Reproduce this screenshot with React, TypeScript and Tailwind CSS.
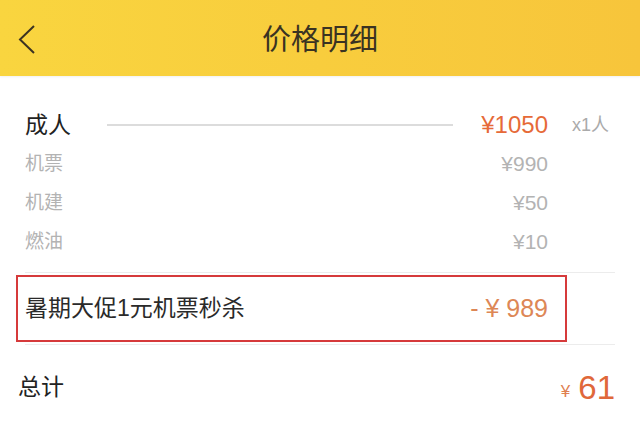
import React from 'react'

const font = { fontFamily: '"Liberation Sans", "Noto Sans CJK SC", sans-serif' }

const fees = [
  { label: '机票', price: '¥990' },
  { label: '机建', price: '¥50' },
  { label: '燃油', price: '¥10' }
]

const App = () => {
  return (
    <div
      className="flex h-[429px] w-[640px] flex-col overflow-hidden bg-white"
      style={font}
    >
      {/* header */}
      <div className="relative flex h-[76px] items-center justify-center bg-gradient-to-r from-[#f9d53f] to-[#f7c53b] shadow-[0_1px_2px_rgba(0,0,0,0.06)]">
        <svg
          className="absolute left-[17px] top-[24px]"
          width="20"
          height="31"
          viewBox="0 0 20 31"
          fill="none"
        >
          <path d="M17 2 L3 15.5 L17 29" stroke="#3b3322" strokeWidth="2" />
        </svg>
        <span className="pt-[5px] text-[29px] text-[#3a3322]">价格明细</span>
      </div>

      <div className="flex flex-col pt-[34px]">
        {/* adult */}
        <div className="flex h-[30px] items-center pl-[25px] pr-[25px]">
          <span className="text-[23px] text-[#222]">成人</span>
          <div className="ml-[36px] mr-[28px] h-[2px] flex-1 bg-[#dcdcdc]" />
          <span className="text-[24px] text-[#e66a38]">¥1050</span>
          <span className="w-[67px] pl-[24px] text-[18px] text-[#aaa]">x1人</span>
        </div>

        {fees.map((f) => (
          <div key={f.label} className="mt-[9px] flex h-[30px] items-center pl-[25px]">
            <span className="text-[19px] text-[#b3b3b3]">{f.label}</span>
            <div className="flex-1" />
            <span className="text-[21px] text-[#b3b3b3]">{f.price}</span>
            <span className="w-[92px]" />
          </div>
        ))}

        <div className="ml-[25px] mr-[25px] mt-[15px] h-px bg-[#ececec]" />

        {/* promotion */}
        <div className="ml-[16px] mr-[73px] mt-[2px] flex h-[67px] items-center border-2 border-[#d63a3b] pl-[7px] pr-[17px]">
          <span className="text-[23px] text-[#2a2a2a]">暑期大促1元机票秒杀</span>
          <div className="flex-1" />
          <span className="text-[25px] text-[#dd8756]">- ¥ 989</span>
        </div>

        <div className="ml-[25px] mr-[25px] mt-[2px] h-px bg-[#ececec]" />

        {/* total */}
        <div className="mt-[25px] flex items-center pl-[18px] pr-[25px]">
          <span className="text-[23px] text-[#222]">总计</span>
          <div className="flex-1" />
          <span className="mr-[8px] mt-[8px] text-[17px] text-[#e08050]">¥</span>
          <span className="text-[33px] leading-none text-[#e0683a]">61</span>
        </div>
      </div>
    </div>
  )
}

export default App
